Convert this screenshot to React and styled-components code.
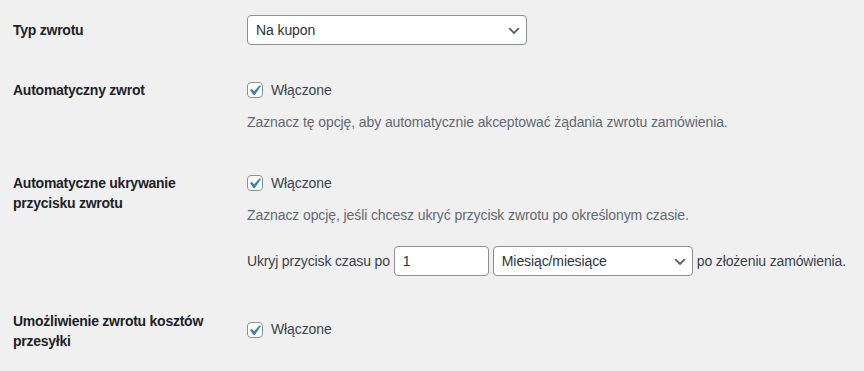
import React from "react";
import styled, { createGlobalStyle } from "styled-components";

const GlobalStyle = createGlobalStyle`
  html, body { margin: 0; padding: 0; }
  body {
    background: #f0f0f1;
    font-family: "Liberation Sans", Arial, sans-serif;
    font-size: 14px;
    color: #3c434a;
    letter-spacing: -0.1px;
  }
  * { box-sizing: border-box; }
`;

const Page = styled.div`
  padding: 0 0 0 13px;
`;

const FormTable = styled.div`
  display: flex;
  flex-direction: column;
`;

const Row = styled.div`
  display: grid;
  grid-template-columns: 200px 1fr;
  column-gap: 34px;
`;

const Label = styled.div`
  align-self: start;
  padding: 20px 0 17px;
  line-height: 20px;
  font-weight: 700;
  color: #1d2327;
  letter-spacing: -0.25px;
`;

const Field = styled.div`
  align-self: center;
  padding: 15px 0;
  display: flex;
  flex-direction: column;
  align-items: flex-start;
  line-height: 1.3;
`;

const SelectWrap = styled.div`
  position: relative;
  width: ${(p) => p.$width}px;
  height: 30px;
  flex: none;
`;

const Select = styled.select`
  appearance: none;
  -webkit-appearance: none;
  width: 100%;
  height: 30px;
  margin: 0;
  padding: 0 24px 0 8px;
  border: 1px solid #8c8f94;
  border-radius: 4px;
  background: #fff;
  color: #2c3338;
  font-family: inherit;
  font-size: 14px;
  letter-spacing: -0.1px;
  line-height: 28px;
  outline: none;
`;

const Chevron = styled.svg`
  position: absolute;
  right: 5px;
  top: 8px;
  width: 16px;
  height: 16px;
  pointer-events: none;
`;

const CheckLabel = styled.label`
  display: flex;
  align-items: center;
  gap: 8px;
  height: 30px;
  color: #3c434a;
`;

const Box = styled.span`
  position: relative;
  display: inline-block;
  width: 16px;
  height: 16px;
  border: 1px solid #8c8f94;
  border-radius: 4px;
  background: #fff;
  flex: none;
`;

const Tick = styled.svg`
  position: absolute;
  left: -4px;
  top: -3px;
  width: 21px;
  height: 21px;
`;

const Description = styled.p`
  margin: 7px 0 6px;
  line-height: 20px;
  color: #646970;
`;

const InlineRow = styled.div`
  display: flex;
  align-items: center;
  gap: 4px;
  margin-top: 15px;
  white-space: nowrap;
`;

const InlineText = styled.span`
  color: #3c434a;
  letter-spacing: -0.15px;
`;

const NumberInput = styled.input`
  width: 95px;
  height: 30px;
  margin: 0;
  padding: 0 8px;
  border: 1px solid #8c8f94;
  border-radius: 4px;
  background: #fff;
  color: #2c3338;
  font-family: inherit;
  font-size: 14px;
  outline: none;
`;

function Dropdown({ width, value, options }) {
  return (
    <SelectWrap $width={width}>
      <Select defaultValue={value}>
        {options.map((o) => (
          <option key={o}>{o}</option>
        ))}
      </Select>
      <Chevron viewBox="0 0 20 20">
        <path d="M5 6l5 5 5-5 2 1-7 7-7-7 2-1z" fill="#50575e" />
      </Chevron>
    </SelectWrap>
  );
}

function Checkbox({ children }) {
  return (
    <CheckLabel>
      <Box>
        <Tick viewBox="0 0 20 20">
          <path
            d="M14.83 4.89l1.34.94-5.81 8.38H9.02L5.78 9.67l1.34-1.25 2.57 2.4z"
            fill="#3582c4"
          />
        </Tick>
      </Box>
      {children}
    </CheckLabel>
  );
}

export default function App() {
  return (
    <>
      <GlobalStyle />
      <Page>
        <FormTable>
          <Row>
            <Label>Typ zwrotu</Label>
            <Field>
              <Dropdown width={280} value="Na kupon" options={["Na kupon", "Zwrot pieniędzy"]} />
            </Field>
          </Row>
          <Row>
            <Label>Automatyczny zwrot</Label>
            <Field>
              <Checkbox>Włączone</Checkbox>
              <Description>
                Zaznacz tę opcję, aby automatycznie akceptować żądania zwrotu zamówienia.
              </Description>
            </Field>
          </Row>
          <Row>
            <Label>Automatyczne ukrywanie przycisku zwrotu</Label>
            <Field>
              <Checkbox>Włączone</Checkbox>
              <Description>
                Zaznacz opcję, jeśli chcesz ukryć przycisk zwrotu po określonym czasie.
              </Description>
              <InlineRow>
                <InlineText>Ukryj przycisk czasu po</InlineText>
                <NumberInput type="text" defaultValue="1" />
                <Dropdown
                  width={200}
                  value="Miesiąc/miesiące"
                  options={["Dzień/dni", "Tydzień/tygodnie", "Miesiąc/miesiące"]}
                />
                <InlineText>po złożeniu zamówienia.</InlineText>
              </InlineRow>
            </Field>
          </Row>
          <Row>
            <Label>Umożliwienie zwrotu kosztów przesyłki</Label>
            <Field>
              <Checkbox>Włączone</Checkbox>
            </Field>
          </Row>
        </FormTable>
      </Page>
    </>
  );
}
